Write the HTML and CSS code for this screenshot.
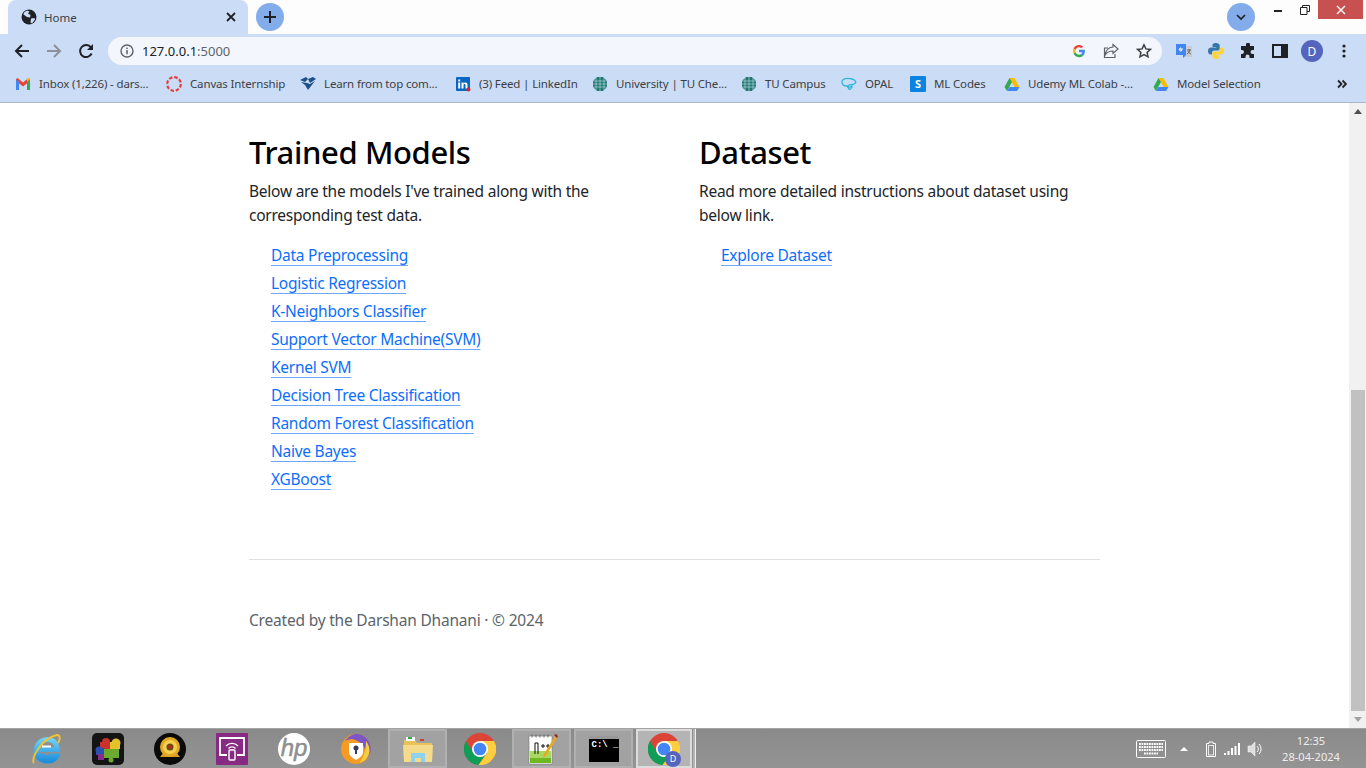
FILE: index.html
```html
<!DOCTYPE html>
<html lang="en">
<head>
<meta charset="utf-8">
<title>Home</title>
<link rel="stylesheet" href="styles.css">
</head>
<body>
<div class="tabstrip">
  <div class="tab">
    <svg class="ic16" viewBox="0 0 16 16"><circle cx="8" cy="8" r="7.500" fill="#202124"/><path d="M3 3.500l3-2 2.500 1-1.500 2 2.500 1.500-.5 2.500-3-.5-3.500-2.500zM10 9.500l3.500-.5.500 1.500-3 4-1.500-1z" fill="#cbdcf6"/></svg>
    <span class="tabtitle">Home</span>
    <svg class="tabx" viewBox="0 0 10 10"><path d="M1 1l8 8M9 1l-8 8" stroke="#202124" stroke-width="1.800" fill="none"/></svg>
  </div>
  <div class="newtab"><svg class="ic12" viewBox="0 0 12 12"><path d="M6 0v12M0 6h12" stroke="#202124" stroke-width="2"/></svg></div>
  <div class="stripfill"></div>
  <div class="tabsearch"><svg class="ic10" viewBox="0 0 10 6"><path d="M1 1l4 4 4-4" stroke="#202124" stroke-width="1.700" fill="none"/></svg></div>
  <div class="winctl">
    <div class="winbtn"><svg class="ic10" viewBox="0 0 10 10"><path d="M1 6h8" stroke="#222" stroke-width="2"/></svg></div>
    <div class="winbtn"><svg class="ic10" viewBox="0 0 10 10"><path d="M.5 2.500h6.500v7H.5zM2.500 2.500V.5h7v6H7" stroke="#222" fill="none"/></svg></div>
    <div class="winbtn close"><svg class="ic10" viewBox="0 0 10 10"><path d="M1 1l8 8M9 1l-8 8" stroke="#fff" stroke-width="1.400"/></svg></div>
  </div>
</div>

<div class="toolbar">
  <div class="navbtn"><svg class="ic16" viewBox="0 0 16 16"><path d="M15 8H2M8 2L2 8l6 6" stroke="#202124" stroke-width="2" fill="none"/></svg></div>
  <div class="navbtn"><svg class="ic16" viewBox="0 0 16 16"><path d="M1 8h13M8 2l6 6-6 6" stroke="#8d9197" stroke-width="2" fill="none"/></svg></div>
  <div class="navbtn"><svg class="ic16" viewBox="0 0 16 16"><path d="M13.600 10.500A6 6 0 1 1 13 4.600" stroke="#202124" stroke-width="2" fill="none"/><path d="M15 1v6H9z" fill="#202124"/></svg></div>
  <div class="omnibox">
    <svg class="ic14" viewBox="0 0 14 14"><circle cx="7" cy="7" r="6" fill="none" stroke="#5f6368" stroke-width="1.400"/><path d="M7 6v4.200M7 3.600v1.400" stroke="#5f6368" stroke-width="1.500"/></svg>
    <span class="url">127.0.0.1<span class="port">:5000</span></span>
    <span class="omnifill"></span>
    <svg class="ic14" viewBox="0 0 48 48"><path d="M44 24c0-1.500-.1-2.900-.4-4H24v8h11.300c-.5 2.700-2 5-4.300 6.500l7 5.400C42.100 36.200 44 30.600 44 24z" fill="#4285f4"/><path d="M24 45c5.700 0 10.500-1.900 14-5.100l-7-5.400c-1.900 1.300-4.300 2-7 2-5.400 0-10-3.600-11.600-8.500L5.200 33.500C8.700 40.400 15.800 45 24 45z" fill="#34a853"/><path d="M12.400 28c-.9-2.600-.9-5.400 0-8l-7.200-5.500a21 21 0 0 0 0 19z" fill="#fbbc05"/><path d="M24 11.400c3.100 0 5.900 1.100 8 3.100l6.100-6.100C34.500 5 29.700 3 24 3 15.800 3 8.700 7.600 5.200 14.500l7.200 5.500C14 15 18.600 11.400 24 11.400z" fill="#ea4335"/></svg>
    <svg class="ic16 gapl" viewBox="0 0 16 16"><path d="M10 1.500l5 4.500-5 4.500V8C6 8 3.500 9.500 2 12.500 2.500 8 5 4.500 10 4zM12 11v3.500H1.500V5H5" stroke="#5f6368" stroke-width="1.200" fill="none"/></svg>
    <svg class="ic16 gapl" viewBox="0 0 16 16"><path d="M8 1.800l1.900 4.100 4.500.5-3.300 3 .9 4.400L8 11.600l-4 2.200.9-4.400-3.300-3 4.500-.5z" stroke="#3c4043" stroke-width="1.500" fill="none"/></svg>
  </div>
  <div class="exts">
    <svg class="ic16" viewBox="0 0 16 16"><path d="M7 3h9v11H7z" fill="#c9ccd1"/><path d="M0 1h10v11l-3 3v-3H0z" fill="#4285f4"/><path d="M7 6H4.800v1.300H6A1.500 1.500 0 1 1 5 5" stroke="#fff" fill="none"/><path d="M11 7h4M13 6v1M14 7c-.5 2-1.500 3-3 4M12 8c.5 1.500 1.500 2.500 3 3" stroke="#555" stroke-width=".8" fill="none"/></svg>
    <svg class="ic16" viewBox="0 0 16 16"><path d="M8 0C5 0 4.500 1.300 4.500 2.500V4H8.200v.6H3C1 4.600 0 6 0 8s1 3.500 2.800 3.500H4V9.700C4 8.300 5.100 7.400 6.500 7.400h3.200c1.200 0 2-.9 2-2V2.500C11.700 1 10.200 0 8 0z" fill="#3776ab"/><path d="M8 16c3 0 3.500-1.300 3.500-2.500V12H7.800v-.6H13c2 0 3-1.400 3-3.400s-1-3.500-2.800-3.500H12v1.800c0 1.400-1.100 2.300-2.500 2.300H6.300c-1.200 0-2 .9-2 2v3C4.300 15 5.800 16 8 16z" fill="#ffd43b"/></svg>
    <svg class="ic16" viewBox="0 0 16 16"><path d="M6 1.500a2 2 0 0 1 4 0V3h4v4h-1.500a2 2 0 0 0 0 4H14v4H9.500v-1.500a2 2 0 0 0-4 0V15H1v-4h1a2 2 0 0 0 0-4H1V3h5z" fill="#202124"/></svg>
    <svg class="ic16" viewBox="0 0 16 16"><path d="M1 2h14v12H1z" fill="none" stroke="#202124" stroke-width="2"/><path d="M9 2h6v12H9z" fill="#202124"/></svg>
    <div class="avatar">D</div>
    <svg class="ic16" viewBox="0 0 16 16"><circle cx="8" cy="3" r="1.600" fill="#202124"/><circle cx="8" cy="8" r="1.600" fill="#202124"/><circle cx="8" cy="13" r="1.600" fill="#202124"/></svg>
  </div>
</div>

<div class="bookmarks">
  <div class="bm"><svg class="ic16" viewBox="0 0 16 16"><path d="M1 5l7 5.500L15 5V3l-1.500-1L8 6.500 2.500 2 1 3z" fill="#ea4335"/><path d="M1 14V3.500L4 6v8z" fill="#4285f4"/><path d="M12 14V6l3-2.500V14z" fill="#34a853"/><path d="M12 6l3-2.500V3l-1.500-1L12 3z" fill="#fbbc05"/></svg><span class="bmtext">Inbox (1,226) - dars...</span></div>
  <div class="bm"><svg class="ic16" viewBox="0 0 16 16"><circle cx="8" cy="8" r="6.800" fill="none" stroke="#e2403a" stroke-width="2.200" stroke-dasharray="3.500 1.840"/></svg><span class="bmtext">Canvas Internship</span></div>
  <div class="bm"><svg class="ic16" viewBox="0 0 16 16"><path d="M0 4l6-3 2 2-3 3zM8 3l5-2 3 2-6 4zM1 6l6 1 3 1 5-3-7 9-3-5z" fill="#1e4f86"/></svg><span class="bmtext">Learn from top com...</span></div>
  <div class="bm"><svg class="ic16" viewBox="0 0 16 16"><rect x="1" y="1" width="14" height="14" rx="1" fill="#0a66c2"/><path d="M3.200 6.500h2v6h-2zM3.200 3.500h2v2h-2zM6.500 6.500h2v1c.9-1.500 4-1.700 4 1.200v3.800h-2V9.200c0-1.500-2-1.400-2 0v3.300h-2z" fill="#fff"/><circle cx="13.500" cy="13.500" r="2" fill="#e0202c"/></svg><span class="bmtext">(3) Feed | LinkedIn</span></div>
  <div class="bm"><svg class="ic16" viewBox="0 0 16 16"><path d="M5 1h6l4 4v6l-4 4H5l-4-4V5z" fill="#1f7a6b"/><path d="M1 5h14M1 8h14M1 11h14M4 1v14M8 1v14M12 1v14" stroke="#cbdcf6" stroke-width=".6"/></svg><span class="bmtext">University | TU Che...</span></div>
  <div class="bm"><svg class="ic16" viewBox="0 0 16 16"><path d="M5 1h6l4 4v6l-4 4H5l-4-4V5z" fill="#1f7a6b"/><path d="M1 5h14M1 8h14M1 11h14M4 1v14M8 1v14M12 1v14" stroke="#cbdcf6" stroke-width=".6"/></svg><span class="bmtext">TU Campus</span></div>
  <div class="bm"><svg class="ic16" viewBox="0 0 16 16"><path d="M1 6C1 2 7 2 11 3c4 1 5 4 2 5-2 1-6 0-6 2s3 1 4 0c.5 2-2 4-3 3l-2-3C3 10 1 9 1 6z" fill="none" stroke="#2fb6dc" stroke-width="1.300"/></svg><span class="bmtext">OPAL</span></div>
  <div class="bm"><div class="sbadge">S</div><span class="bmtext">ML Codes</span></div>
  <div class="bm"><svg class="ic16" viewBox="0 0 16 16"><path d="M5.500 2h5l5 9h-5z" fill="#fbbc05"/><path d="M5.500 2L.5 11 3 15l5-9z" fill="#34a853"/><path d="M5.500 11h10L13 15H3z" fill="#4285f4"/></svg><span class="bmtext">Udemy ML Colab -...</span></div>
  <div class="bm"><svg class="ic16" viewBox="0 0 16 16"><path d="M5.500 2h5l5 9h-5z" fill="#fbbc05"/><path d="M5.500 2L.5 11 3 15l5-9z" fill="#34a853"/><path d="M5.500 11h10L13 15H3z" fill="#4285f4"/></svg><span class="bmtext">Model Selection</span></div>
  <div class="bmmore"><svg class="ic10" viewBox="0 0 10 10"><path d="M1 1.500L4.500 5 1 8.500M5.500 1.500L9 5 5.500 8.500" stroke="#202124" stroke-width="1.800" fill="none"/></svg></div>
</div>

<div class="viewport">
  <main class="page">
    <div class="columns">
      <section class="col">
        <h2>Trained Models</h2>
        <p>Below are the models I've trained along with the corresponding test data.</p>
        <ul>
          <li><a href="#">Data Preprocessing</a></li>
          <li><a href="#">Logistic Regression</a></li>
          <li><a href="#">K-Neighbors Classifier</a></li>
          <li><a href="#">Support Vector Machine(SVM)</a></li>
          <li><a href="#">Kernel SVM</a></li>
          <li><a href="#">Decision Tree Classification</a></li>
          <li><a href="#">Random Forest Classification</a></li>
          <li><a href="#">Naive Bayes</a></li>
          <li><a href="#">XGBoost</a></li>
        </ul>
      </section>
      <section class="col">
        <h2>Dataset</h2>
        <p>Read more detailed instructions about dataset using below link.</p>
        <ul>
          <li><a href="#">Explore Dataset</a></li>
        </ul>
      </section>
    </div>
    <hr>
    <footer>Created by the Darshan Dhanani · © 2024</footer>
  </main>
  <div class="scrollbar">
    <div class="arrow"><svg class="ic8" viewBox="0 0 8 5"><path d="M0 5l4-5 4 5z" fill="#505050"/></svg></div>
    <div class="track"><div class="thumb"></div></div>
    <div class="arrow"><svg class="ic8" viewBox="0 0 8 5"><path d="M0 0l4 5 4-5z" fill="#a3a3a3"/></svg></div>
  </div>
</div>

<div class="taskbar">
  <div class="tasks">
    <div class="task"><svg class="ic32" viewBox="0 0 32 32"><defs><linearGradient id="ieblue" x1="0" y1="0" x2="0" y2="1"><stop offset="0" stop-color="#6fd0f5"/><stop offset="1" stop-color="#1f8fdc"/></linearGradient></defs><path d="M8 16.500h19C27 10 23 6.500 17.500 6.500S6 11 6 17.500 11 28 17.500 28c4 0 7.500-1.800 9.200-5H21c-2.500 2.500-8 2-9.500-2.500" fill="none" stroke="url(#ieblue)" stroke-width="5"/><path d="M12 13.500h9" stroke="#fff" stroke-width="2"/><path d="M4 30C0 26 12 5 27 2c4 0 3 5 1 8" fill="none" stroke="#f2c230" stroke-width="1.800"/></svg></div>
    <div class="task"><svg class="ic32" viewBox="0 0 32 32"><rect width="32" height="32" rx="5" fill="#141414"/><circle cx="14" cy="9" r="4" fill="#c8322b"/><circle cx="24" cy="10" r="4.500" fill="#e4c22c"/><rect x="8" y="9" width="10" height="7" fill="#c8322b"/><rect x="18" y="9" width="10" height="7" fill="#e4c22c"/><circle cx="7" cy="17" r="3.500" fill="#2a4fb0"/><rect x="4" y="15" width="8" height="7" fill="#2a4fb0"/><rect x="12" y="16" width="15" height="9" fill="#6bab2e"/><circle cx="19" cy="27" r="2.500" fill="#6bab2e"/><rect x="6" y="21" width="6" height="6" fill="#8a2b8c"/></svg></div>
    <div class="task"><svg class="ic32" viewBox="0 0 32 32"><circle cx="16" cy="16" r="16" fill="#0a0a0a"/><path d="M6 24h20l-4-5H10z" fill="#d99a20"/><circle cx="16" cy="14" r="10" fill="#e3a825"/><circle cx="16" cy="14" r="7" fill="#f5d04e"/><circle cx="16" cy="14" r="3.500" fill="#6a4a12"/><circle cx="16" cy="14" r="1.500" fill="#d32020"/></svg></div>
    <div class="task"><svg class="ic32" viewBox="0 0 32 32"><rect width="32" height="32" rx="1" fill="#862a82"/><path d="M11 22H4V5h24v17h-7" stroke="#fff" stroke-width="1.800" fill="none"/><rect x="13" y="17" width="6" height="10" rx="1" stroke="#fff" stroke-width="1.400" fill="none"/><path d="M10 13a8 8 0 0 1 12 0M12.500 15.500a4.500 4.500 0 0 1 7 0" stroke="#fff" stroke-width="1.300" fill="none"/></svg></div>
    <div class="task"><svg class="ic32" viewBox="0 0 32 32"><circle cx="16" cy="16" r="16" fill="#fff"/><text x="16" y="23" text-anchor="middle" class="hp">hp</text></svg></div>
    <div class="task"><svg class="ic32" viewBox="0 0 32 32"><circle cx="16" cy="16" r="15" fill="#f59a23"/><path d="M16 1a15 15 0 0 1 15 15c0 4-2 8-5 10 2-8-3-18-14-20-3 0-5 1-7 2 3-4 7-7 11-7z" fill="#7c55c7"/><path d="M26 8c4 5 5 12 1 17-2 2-5 4-8 5 5-5 7-14 7-22z" fill="#f0d040"/><path d="M9 10h14v9c0 4-4 6-7 8-3-2-7-4-7-8z" fill="#fff"/><circle cx="16" cy="15" r="2.500" fill="#3a3a5a"/><rect x="15" y="16" width="2" height="5" fill="#3a3a5a"/></svg></div>
    <div class="task on"><svg class="ic32" viewBox="0 0 32 32"><path d="M2 7h11l2 3h15v6H2z" fill="#e8c35a"/><path d="M4 4h9v4H4z" fill="#fff"/><rect x="6" y="4" width="4" height="2" fill="#35a84e"/><rect x="18" y="6" width="4" height="2" fill="#d23b30"/><path d="M1 12h30l-1 17H2z" fill="#f4dc8c"/><path d="M9 20h14v9h-4v-4h-6v4H9z" fill="#8fd2f0"/></svg></div>
    <div class="task"><svg class="ic32" viewBox="0 0 32 32"><circle cx="16" cy="16" r="16" fill="#db4437"/><path d="M2 8L9.500 20H23L14.500 32A16 16 0 0 1 2 8z" fill="#0f9d58"/><path d="M30 8A16 16 0 0 1 14.500 32L23 20 16 8z" fill="#ffcd40"/><circle cx="16" cy="16" r="8" fill="#fff"/><circle cx="16" cy="16" r="6.300" fill="#4285f4"/></svg></div>
    <div class="task on"><svg class="ic32" viewBox="0 0 32 32"><path d="M3 3h23v28H3z" fill="#fff" stroke="#777" stroke-width=".6"/><path d="M4 18h21v12H4z" fill="#a8d860"/><path d="M4 25h21v5H4z" fill="#6fb822"/><path d="M6 1.500v3M10 1.500v3M14 1.500v3M18 1.500v3M22 1.500v3" stroke="#666"/><path d="M9 21V10h3v11" stroke="#111" fill="none"/><path d="M15 13h4M17 11v4M20 13h4M22 11v4" stroke="#111"/><path d="M29 3l2 2-11 18-3 2 1-4z" fill="#eaa823"/><path d="M28 2l3 3 1-2-2-2z" fill="#8b2a2a"/></svg></div>
    <div class="task on"><div class="cmd"><span class="cmdtext">C:\ _</span></div></div>
    <div class="task on active"><span class="chromewrap"><svg class="ic32" viewBox="0 0 32 32"><circle cx="16" cy="16" r="16" fill="#db4437"/><path d="M2 8L9.500 20H23L14.500 32A16 16 0 0 1 2 8z" fill="#0f9d58"/><path d="M30 8A16 16 0 0 1 14.500 32L23 20 16 8z" fill="#ffcd40"/><circle cx="16" cy="16" r="8" fill="#fff"/><circle cx="16" cy="16" r="6.300" fill="#4285f4"/></svg><span class="chromebadge">D</span></span></div>
    <div class="sliver"></div>
  </div>
  <div class="tray">
    <svg class="kbd" viewBox="0 0 30 18"><rect x=".5" y=".5" width="29" height="17" rx="1" fill="none" stroke="#fff"/><path d="M3 4h24M3 7h24M3 10h24M8 13.500h14" stroke="#fff" stroke-width="1.800" stroke-dasharray="1.800 .7"/></svg>
    <svg class="trayup" viewBox="0 0 10 6"><path d="M0 6l5-5 5 5z" fill="#fff"/></svg>
    <svg class="batt" viewBox="0 0 10 16"><path d="M3 1h4v1.500h2.500v13H.5v-13H3z" fill="none" stroke="#fff"/><rect x="2.500" y="4.500" width="5" height="9.500" fill="none" stroke="#e8e8e8"/></svg>
    <svg class="signal" viewBox="0 0 16 12"><path d="M0 10h2v2H0zM3.500 8h2v4h-2zM7 5h2v7H7zM10.500 3h2v9h-2zM14 0h2v12h-2z" fill="#fff"/></svg>
    <svg class="sound" viewBox="0 0 16 16"><path d="M1 5h3l4-4v14l-4-4H1z" fill="#ddd" stroke="#fff" stroke-width=".5"/><path d="M10 5a4 4 0 0 1 0 6M12 3a7 7 0 0 1 0 10" stroke="#fff" fill="none"/></svg>
    <div class="clock"><div>12:35</div><div>28-04-2024</div></div>
  </div>
</div>
</body>
</html>
```

FILE: styles.css
```css
* { box-sizing: border-box; }
html, body { margin: 0; height: 100%; overflow: hidden; }
body {
  display: flex;
  flex-direction: column;
  width: 1366px;
  height: 768px;
  background: #fff;
  font-family: "Noto Sans", "Open Sans", sans-serif;
  color: #212529;
}
svg { display: block; flex: none; }
.ic8 { width: 8px; height: 5px; }
.ic10 { width: 10px; height: 10px; }
.ic12 { width: 12px; height: 12px; }
.ic14 { width: 14px; height: 14px; }
.ic16 { width: 16px; height: 16px; }
.ic32 { width: 32px; height: 32px; }

.tabstrip { display: flex; height: 34px; background: #fdfdfd; flex: none; }
.tab {
  width: 240px;
  margin-left: 8px;
  background: #cbdcf6;
  border-radius: 8px 8px 0 0;
  display: flex;
  align-items: center;
  padding: 0 12px 0 13px;
  gap: 7px;
}
.tabtitle { flex: 1; font-size: 11.500px; color: #3c4043; }
.tabx { width: 10px; height: 10px; }
.newtab, .tabsearch {
  width: 28px; height: 28px; border-radius: 50%;
  background: #83acea;
  display: flex; align-items: center; justify-content: center;
  margin-top: 3px;
}
.newtab { margin-left: 8px; }
.stripfill { flex: 1; }
.winctl { display: flex; margin-left: 9px; height: 19px; margin-right: 3px; }
.winbtn { width: 27px; display: flex; align-items: center; justify-content: center; }
.winbtn.close { width: 45px; background: #c75050; }

.toolbar {
  height: 34px; flex: none;
  background: #cbdcf6;
  display: flex;
  align-items: center;
  padding-left: 6px;
}
.navbtn { width: 32px; display: flex; justify-content: center; }
.omnibox {
  margin-left: 6px;
  width: 1054px;
  height: 28px;
  border-radius: 14px;
  background: #f3f7fd;
  display: flex;
  align-items: center;
  padding: 0 10px 0 12px;
}
.url { margin-left: 8px; font-size: 13px; color: #202124; }
.port { color: #5f6368; }
.omnifill { flex: 1; }
.gapl { margin-left: 17px; }
.exts { display: flex; align-items: center; gap: 16px; margin-left: 14px; }
.avatar {
  width: 22px; height: 22px; border-radius: 50%;
  margin: 0 -3px;
  background: #5565bd; color: #fff;
  font-size: 12px;
  display: flex; align-items: center; justify-content: center;
}

.bookmarks {
  height: 35px; flex: none;
  background: #cbdcf6;
  border-bottom: 1px solid #a9b6cc;
  display: grid;
  grid-template-columns: 151px 134px 155px 137px 149px 100px 69px 94px 149px 1fr 22px;
  align-items: center;
  padding: 0 13px 3px 15px;
}
.bm { display: flex; align-items: center; gap: 8px; }
.bmtext { font-size: 11.500px; letter-spacing: -0.15px; color: #3c4043; white-space: nowrap; }
.sbadge {
  width: 16px; height: 16px;
  background: #0a84e0; color: #fff;
  font-size: 11px; font-weight: 700;
  display: flex; align-items: center; justify-content: center;
  border-radius: 1px;
}
.bmmore { display: flex; justify-content: center; }

.viewport { flex: 1; display: flex; min-height: 0; }
.page { flex: 1; padding: 30px 249px 0 249px; }
.columns { display: flex; height: 426px; }
.col { width: 450px; }
.col:last-child { width: 401px; }
h2 {
  margin: 0 0 8px;
  font-size: 31px;
  line-height: 38px;
  font-weight: 500;
  letter-spacing: -0.38px;
  color: #000;
}
p {
  margin: 0 0 16px;
  font-size: 15.500px;
  line-height: 24px;
  letter-spacing: -0.24px;
  max-width: 375px;
}
ul { margin: 0; padding: 0 0 0 22px; list-style: none; }
li { height: 28px; font-size: 15.500px; line-height: 24px; letter-spacing: -0.26px; }
a {
  color: #0d6efd;
  text-decoration: underline;
  text-decoration-color: #6ea8fe;
  text-decoration-thickness: 1px;
  text-underline-offset: 4px;
}
hr { margin: 0; border: 0; border-top: 1px solid #dfe0e1; }
footer { margin-top: 48px; font-size: 15.500px; line-height: 24px; letter-spacing: -0.2px; color: #5c636a; }

.scrollbar { width: 17px; background: #f1f1f1; display: flex; flex-direction: column; }
.arrow { height: 17px; display: flex; align-items: center; justify-content: center; flex: none; }
.track { flex: 1; display: flex; flex-direction: column; justify-content: flex-end; padding: 0 1px 0 2px; }
.thumb { height: 321px; background: #c1c1c1; }

.taskbar {
  height: 40px; flex: none;
  background: linear-gradient(#8a8a8a, #949494);
  border-top: 1px solid #a3a3a3;
  display: flex;
  justify-content: space-between;
}
.tasks { display: grid; grid-template-columns: repeat(10, 62px) 58px 4px; margin-left: 15px; }
.task { display: flex; align-items: center; justify-content: center; }
.task.on { background: #a2a2a2; border: 2px solid #b0b0b0; width: 59px; margin-left: 1px; }
.task.active { background: #b4b4b4; border-color: #dcdcdc; width: 56px; }
.sliver { width: 3px; background: #b4b4b4; border-right: 1px solid #eee; }
.cmd { width: 30px; height: 26px; background: #000; border-top: 3px solid #999; }
.cmdtext { font-family: "Liberation Mono", monospace; font-size: 9px; color: #fff; font-weight: 700; display: block; line-height: 12px; padding-left: 3px; white-space: pre; }
.chromewrap { position: relative; display: block; }
.chromebadge {
  position: absolute; right: -1px; bottom: -2px;
  width: 16px; height: 16px; border-radius: 50%;
  background: #5565bd; color: #fff; font-size: 9px;
  display: flex; align-items: center; justify-content: center;
}
.hp { font-family: "Liberation Sans", sans-serif; font-style: italic; font-size: 24px; fill: #8f8f8f; stroke: #8f8f8f; stroke-width: .5px; }

.tray { display: flex; align-items: center; padding-right: 22px; }
.kbd { width: 30px; height: 18px; }
.trayup { width: 8px; height: 5px; margin-left: 14px; }
.batt { width: 10px; height: 16px; margin-left: 18px; }
.signal { width: 16px; height: 12px; margin-left: 8px; }
.sound { width: 16px; height: 16px; margin-left: 7px; }
.clock { margin-left: 15px; width: 66px; text-align: center; font-size: 11.100px; line-height: 16px; color: #eee; }
```
